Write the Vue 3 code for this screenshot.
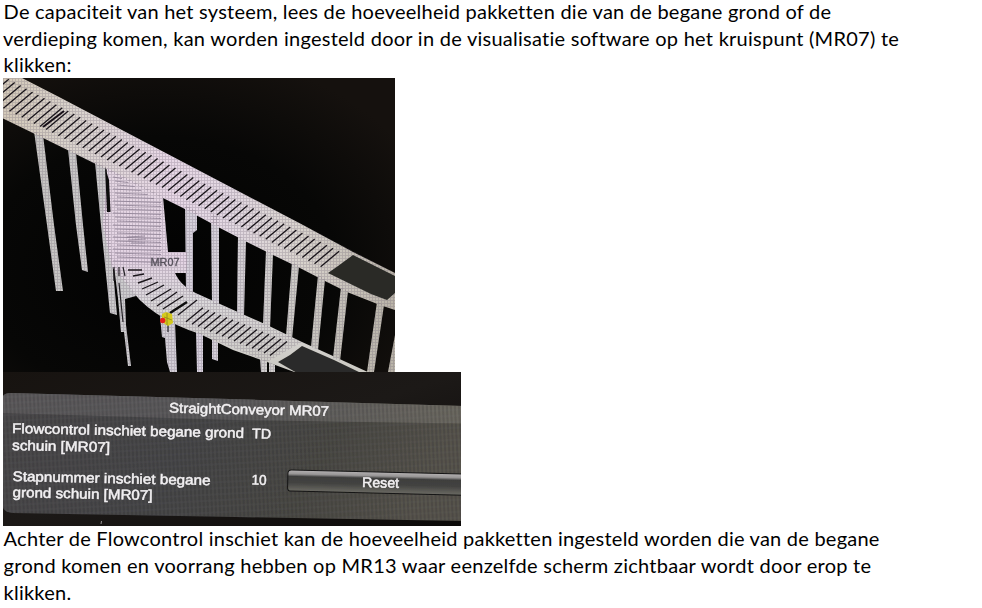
<script setup>
const intro = [
  'De capaciteit van het systeem, lees de hoeveelheid pakketten die van de begane grond of de',
  'verdieping komen, kan worden ingesteld door in de visualisatie software op het kruispunt (MR07) te',
  'klikken:'
]
const outro = [
  'Achter de Flowcontrol inschiet kan de hoeveelheid pakketten ingesteld worden die van de begane',
  'grond komen en voorrang hebben op MR13 waar eenzelfde scherm zichtbaar wordt door erop te',
  'klikken.'
]

// Roller marks on the upper conveyor, longer towards the near end
let rollers = ''
for (let x = -21; x < 326; x += 6.1) {
  const y = 128 + (x - 43) * 0.5
  const k = x < 200 ? 1 + (200 - x) * 0.0013 : 1
  rollers += `M${x.toFixed(1)} ${y.toFixed(1)}l${(18.5 * k).toFixed(1)} ${(-15.5 * k).toFixed(1)}`
}

// Roller marks on the lower conveyor, straight section
let lowerRollers = ''
for (let x = 186; x < 276; x += 6) {
  const y = 321 + (x - 184) * 0.4
  lowerRollers += `M${x} ${y.toFixed(1)}l17 -14`
}

// Fine horizontal rollers of the crossing
let crossing = ''
for (let i = 0; i < 22; i++) {
  const y = 177 + i * 4
  const right = y < 198 ? 122 + (y - 177) * 1.6 : 161
  crossing += `M${113 + (i % 3) * 2} ${y}L${right} ${y + 1.5}`
}

const legs = [
  '34,131 43,135 54,225 63,291 56,291 47,225',
  '68,149 76,153 83,225 88,272 82,270 76,225',
  '95,162 106,167 109,225 117,315 110,313 101,225',
  '185,205 197,211 197,230 193,233 193,293 186,290',
  '211,213 219,217 219,306 212,303',
  '238,236 246,240 244,316 237,313',
  '266,250 273,254 270,328 263,325',
  '292,262 299,266 292,339 286,336',
  '318,275 325,279 318,350 311,347',
  '341,287 348,291 340,361 333,358',
  '377,302 384,305 374,372 367,372',
  '395,335 395,372 388,372',
  '212,338 218,340 218,361 212,359',
  '196,331 203,334 203,372 197,372',
  '260,358 267,361 267,372 261,372',
  '269,362 275,365 275,372 269,372',
  '160,316 175,322 177,372 170,372 167,362 165,338 162,337',
  '114,266 121,270 128,283 136,296 125,299 126,325 131,366 128,366 124,332 121,332 118,298'
]

const labels = [
  { t: 'StraightConveyor MR07', x: 169, y: 412.6, w: 160 },
  { t: 'Flowcontrol inschiet begane grond', x: 12, y: 433, w: 232 },
  { t: 'TD', x: 252, y: 438.3, w: 19 },
  { t: 'schuin [MR07]', x: 12, y: 450, w: 98 },
  { t: 'Stapnummer inschiet begane', x: 12.5, y: 481, w: 198 },
  { t: 'grond schuin [MR07]', x: 12.5, y: 497, w: 140 },
  { t: '10', x: 251.5, y: 484.6, w: 15 },
  { t: 'Reset', x: 362, y: 487, w: 37 }
]
</script>

<template>
  <main class="page">
    <p class="para">
      <span v-for="(l, i) in intro" :key="i" class="line" :class="'a' + i">{{ l }}</span>
    </p>

    <svg class="photo" width="392" height="294" viewBox="3 78 392 294">
      <defs>
        <linearGradient id="belt" gradientUnits="userSpaceOnUse" x1="3" y1="0" x2="395" y2="0">
          <stop offset="0" stop-color="#d3c9b8" />
          <stop offset=".2" stop-color="#dad4cf" />
          <stop offset=".42" stop-color="#e8d8e7" />
          <stop offset=".58" stop-color="#e2d8e2" />
          <stop offset=".75" stop-color="#dad5cf" />
          <stop offset="1" stop-color="#bab4a8" />
        </linearGradient>
        <linearGradient id="leg" gradientUnits="userSpaceOnUse" x1="3" y1="0" x2="395" y2="0">
          <stop offset="0" stop-color="#c4c2bd" />
          <stop offset=".3" stop-color="#cccbcd" />
          <stop offset=".5" stop-color="#d6d0dc" />
          <stop offset=".7" stop-color="#cfcdca" />
          <stop offset="1" stop-color="#b9b4a8" />
        </linearGradient>
        <linearGradient id="cross" x1="0" y1="0" x2="0" y2="1">
          <stop offset="0" stop-color="#e6d8e4" />
          <stop offset=".45" stop-color="#e4d4e4" />
          <stop offset=".65" stop-color="#dbd9db" />
          <stop offset="1" stop-color="#cbc9c2" />
        </linearGradient>
        <radialGradient id="night" cx=".4" cy=".65" r=".75">
          <stop offset="0" stop-color="#020202" />
          <stop offset=".6" stop-color="#070706" />
          <stop offset="1" stop-color="#15110e" />
        </radialGradient>
        <pattern id="pixels" width="3" height="3" patternUnits="userSpaceOnUse">
          <path d="M0 .5H3M.5 0V3" stroke="#6a6070" stroke-width=".8" opacity=".3" />
        </pattern>
        <filter id="soft" x="-5%" y="-5%" width="110%" height="110%">
          <feGaussianBlur stdDeviation=".45" />
        </filter>
      </defs>
      <rect x="3" y="78" width="392" height="294" fill="url(#night)" />
      <g filter="url(#soft)">
        <g fill="url(#leg)">
          <polygon v-for="p in legs" :key="p" :points="p" />
        </g>
        <polygon points="0,67 22,78 60,97.5 200,171 303,225 353,252 395,273 395,310 380,305 347,292 325,281 300,268 273,255 245,241 220,228 183,208 163,198 100,166 33,133 0,117" fill="url(#belt)" />
        <path d="M107 168L163 197L168 252H187V273H175Q181 287 200 295L240 313L267 325L302 342L333 356L370 373H297L267 362L233 350L200 334Q148 317 127 284L112 267L103 225Z" fill="url(#cross)" />
        <g fill="url(#pixels)">
          <polygon v-for="p in legs" :key="p" :points="p" />
          <polygon points="0,67 200,171 395,273 395,310 347,292 273,255 183,208 0,117" />
          <path d="M107 168L163 197L168 252H187V273H175Q181 287 200 295L302 342L267 362L200 334Q148 317 127 284L112 267L103 225Z" />
        </g>
        <polygon points="353,255 395,276 395,293 387,300 371,294 328,273 338,266" fill="#292a27" />
        <polygon points="302,346 334,360 361,373 297,373 278,362 290,355" fill="#2b2b29" />
        <path d="M105 167L109 180L110.5 212H107Z" fill="#090809" />
        <path :d="rollers" class="mark" />
        <path d="M43 127L64 111" stroke="#171119" stroke-width="2.2" />
        <path :d="lowerRollers" class="mark" />
        <path d="M128 270H142M133 276L144 274M138 283L152 278M142 289L158 282M146 295L164 285M151 301L171 289M157 306L177 292M163 309L183 296M178 315L197 300" class="mark" />
        <path d="M170 313L187 302" stroke="#080808" stroke-width="2.5" />
        <path :d="crossing" class="fine" />
        <path d="M114 267V281M119 267V276M123 267L125 276M119 283L123 322M168 325V332" class="crack" />
        <path d="M127 237L145 236M128 240L146 239M131 243H145" class="fine" />
        <path d="M162 314L166 312L172 314L173 323L168 326L162 322Z" fill="#d4c91d" />
        <path d="M167 313V325M164 317L172 320" stroke="#8b871e" stroke-width=".8" />
        <circle cx="162.7" cy="320.5" r="2.7" fill="#e5241b" />
        <text x="150.5" y="266" class="tag" textLength="29" lengthAdjust="spacingAndGlyphs">MR07</text>
      </g>
    </svg>

    <svg class="photo" width="458" height="154" viewBox="3 372 458 154">
      <defs>
        <linearGradient id="frame" x1="0" y1="0" x2="1" y2="1">
          <stop offset="0" stop-color="#171310" />
          <stop offset=".5" stop-color="#1c1917" />
          <stop offset="1" stop-color="#0c0a09" />
        </linearGradient>
        <linearGradient id="panel" x1="0" y1="0" x2="1" y2=".15">
          <stop offset="0" stop-color="#4a4849" />
          <stop offset=".45" stop-color="#464647" />
          <stop offset=".75" stop-color="#494843" />
          <stop offset="1" stop-color="#56534b" />
        </linearGradient>
        <linearGradient id="title" x1="0" y1="0" x2="1" y2="0">
          <stop offset="0" stop-color="#5b595a" />
          <stop offset=".5" stop-color="#5a595a" />
          <stop offset="1" stop-color="#6b685f" />
        </linearGradient>
        <linearGradient id="button" x1="0" y1="0" x2="0" y2="1">
          <stop offset="0" stop-color="#b4b1b2" />
          <stop offset=".18" stop-color="#979595" />
          <stop offset=".3" stop-color="#3e3e3d" />
          <stop offset=".6" stop-color="#434341" />
          <stop offset="1" stop-color="#6b6a63" />
        </linearGradient>
        <pattern id="weave" width="4" height="6" patternUnits="userSpaceOnUse" patternTransform="rotate(-3)">
          <path d="M1 0V6" stroke="#14161b" stroke-width="1" opacity=".3" />
          <path d="M0 1H4" stroke="#8a8a90" stroke-width=".7" opacity=".12" />
        </pattern>
        <filter id="soft2" x="-5%" y="-5%" width="110%" height="110%">
          <feGaussianBlur stdDeviation=".35" />
        </filter>
      </defs>
      <rect x="3" y="372" width="458" height="154" fill="url(#frame)" />
      <g filter="url(#soft2)">
        <path d="M3 396Q5 393 11 393L230 399L465 406V521L235 517L12 513Q5 512 3 508Z" fill="url(#panel)" />
        <path d="M3 396Q5 393 11 393L230 399L465 406V423.500L235 420L3 413Z" fill="url(#title)" />
        <path d="M3 396Q5 393 11 393L230 399L465 406V521L235 517L12 513Q5 512 3 508Z" fill="url(#weave)" />
        <g transform="rotate(1.35 288 470)">
          <rect x="288" y="470" width="182" height="21" rx="3.500" fill="url(#button)" stroke="#151515" stroke-width="1" />
        </g>
        <path d="M101.500 521L101 524" stroke="#9a9696" />
        <text
          v-for="l in labels"
          :key="l.t"
          :x="l.x"
          :y="l.y"
          :textLength="l.w"
          :transform="`rotate(1.2 ${l.x} ${l.y})`"
          lengthAdjust="spacingAndGlyphs"
          class="label"
        >{{ l.t }}</text>
      </g>
    </svg>

    <p class="para last">
      <span v-for="(l, i) in outro" :key="i" class="line" :class="'b' + i">{{ l }}</span>
    </p>
  </main>
</template>

<style>
body {
  background: #fff;
}
</style>

<style scoped>
.page {
  display: flex;
  flex-direction: column;
  align-items: flex-start;
  box-sizing: border-box;
  height: 608px;
  padding-left: 3px;
  overflow: hidden;
}
.para {
  box-sizing: border-box;
  flex: none;
  margin: 0;
  height: 78px;
  color: #000;
  font-family: Lato, sans-serif;
  font-size: 20px;
  line-height: 26.5px;
  letter-spacing: 0.235px;
  white-space: nowrap;
}
.para:first-child {
  margin-top: -2px;
  height: 80px;
}
.last {
  margin-top: -1px;
  height: 83px;
  line-height: 27px;
}
.line {
  display: block;
}
.a0,
.b0,
.b1,
.b2 {
  padding-left: 0.6px;
}
.a1 {
  letter-spacing: 0.262px;
}
.b1 {
  letter-spacing: 0.262px;
}
.a2 {
  padding-left: 0.6px;
}
.photo {
  display: block;
  flex: none;
}
.mark {
  fill: none;
  stroke: #1c181d;
  stroke-width: 1.35;
}
.fine {
  fill: none;
  stroke: #83768a;
  stroke-width: 0.7;
}
.crack {
  fill: none;
  stroke: #242126;
  stroke-width: 1.2;
}
.tag {
  fill: #55505a;
  stroke: #55505a;
  stroke-width: 0.3;
  font: 10.5px 'Liberation Sans', sans-serif;
}
.label {
  fill: #f2f0f2;
  stroke: #f2f0f2;
  stroke-width: 0.5;
  font: 14px 'Liberation Sans', sans-serif;
}
</style>
